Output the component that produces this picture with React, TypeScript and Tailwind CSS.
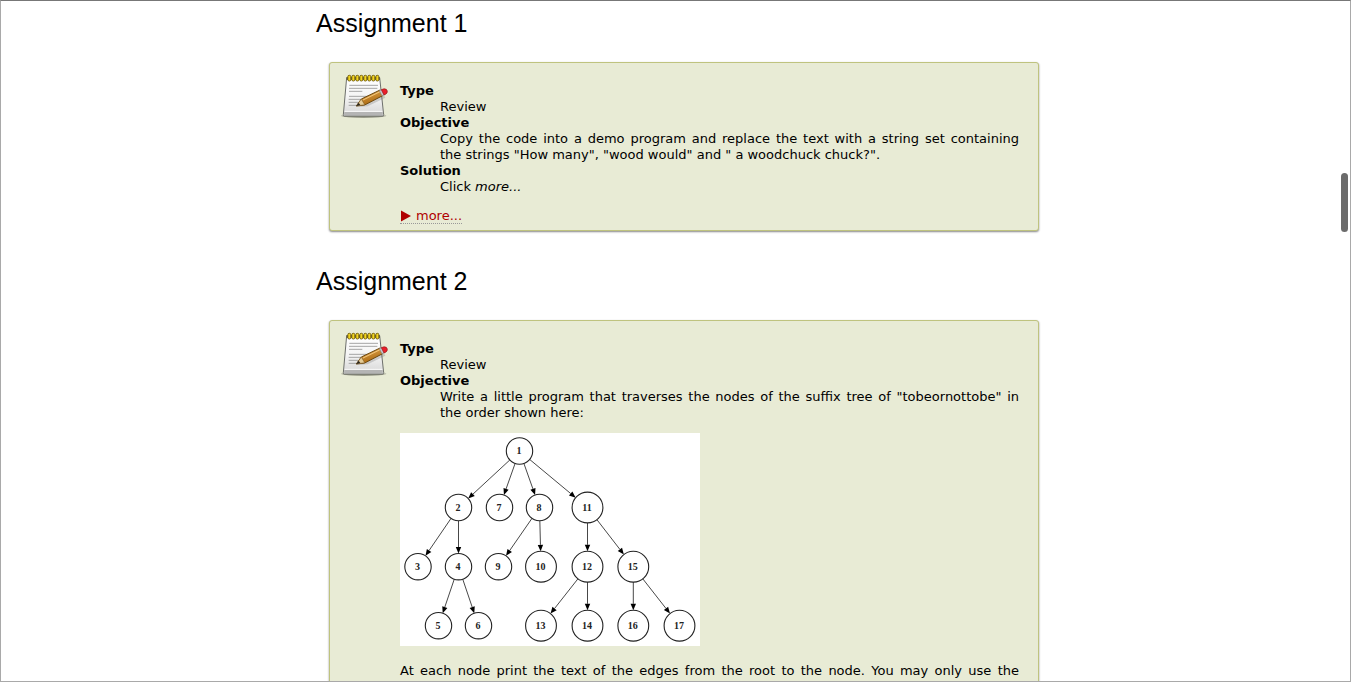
import type { ReactNode } from "react";

function NotepadIcon() {
  const rings = [43, 55, 67, 79, 91, 103, 115, 127];
  return (
    <svg viewBox="15 18 144 144" className="size-12 shrink-0" aria-hidden="true">
      <defs>
        <linearGradient id="paper" x1="0" y1="0" x2="0" y2="1">
          <stop offset="0" stopColor="#ffffff" />
          <stop offset="0.5" stopColor="#f4f4f4" />
          <stop offset="1" stopColor="#d6d6d6" />
        </linearGradient>
        <linearGradient id="wood" x1="0" y1="0" x2="0.4" y2="1">
          <stop offset="0" stopColor="#eab058" />
          <stop offset="1" stopColor="#a8660e" />
        </linearGradient>
      </defs>
      <ellipse cx="86" cy="152" rx="68" ry="7" fill="#77786a" opacity="0.35" />
      <ellipse cx="86" cy="153" rx="62" ry="5" fill="#55564a" opacity="0.45" />
      <path d="M35 38H134L146 149Q146 153 142 153H28Q24 153 25 149Z" fill="url(#paper)" stroke="#6d6f6b" strokeWidth="3" />
      <path d="M28 141H143V151H27Z" fill="#b4b4b4" />
      <path d="M29 139H142" stroke="#fafafa" strokeWidth="3" />
      <path d="M43 61H129M42 70H127M42 79H82M42 94H114M41 103H108M41 112H85M41 121H76" stroke="#999999" strokeWidth="2.6" />
      <path d="M34 41H135" stroke="#66645a" strokeWidth="8" />
      {rings.map((x) => (
        <rect key={x} x={x - 4.5} y="31" width="9" height="17" rx="4" fill="#f2d51f" stroke="#665208" strokeWidth="2.6" />
      ))}
      <path d="M68 126L98 124L151 98L144 86Z" fill="#777" opacity="0.3" />
      <path d="M64 123L79 102L135 75L143 92L89 120Z" fill="url(#wood)" stroke="#6e4a12" strokeWidth="3" strokeLinejoin="round" />
      <path d="M64 123L79 102L89 119Z" fill="#e6cc96" stroke="#745221" strokeWidth="1.5" />
      <path d="M63 124L71 113L76 120Z" fill="#29251e" />
      <path d="M84 105L135 80" stroke="#f7cb80" strokeWidth="3" />
      <path d="M133 77L141 73L148 89L141 93Z" fill="#c9cbcf" stroke="#777" strokeWidth="1.5" />
      <path d="M139 74Q148 69 154 73Q159 78 156 84Q153 88 147 90Z" fill="#ea1f2b" stroke="#911717" strokeWidth="2" />
    </svg>
  );
}

const nodes: Record<number, [number, number]> = {
  1: [119.5, 18],
  2: [58.5, 74.5],
  3: [18, 133.7],
  4: [58.5, 133.7],
  5: [38.5, 192.7],
  6: [78.5, 192.7],
  7: [99.5, 74.5],
  8: [139.5, 74.5],
  9: [98.5, 133.7],
  10: [141, 133.7],
  11: [187.5, 74.5],
  12: [187.5, 133.7],
  13: [141, 192.7],
  14: [187.5, 192.7],
  15: [233.3, 133.7],
  16: [233.3, 192.7],
  17: [279.5, 192.7],
};

const edges: [number, number][] = [
  [1, 2], [1, 7], [1, 8], [1, 11], [2, 3], [2, 4], [4, 5], [4, 6],
  [8, 9], [8, 10], [11, 12], [11, 15], [12, 13], [12, 14], [15, 16], [15, 17],
];

const radius = (id: number) => (id < 10 ? 13.2 : 15.4);

function SuffixTree() {
  return (
    <svg viewBox="0 0 300 213" width="300" height="213" className="block bg-white" role="img" aria-label="Suffix tree">
      {edges.map(([from, to]) => {
        const [ax, ay] = nodes[from];
        const [bx, by] = nodes[to];
        const length = Math.hypot(bx - ax, by - ay);
        const ux = (bx - ax) / length;
        const uy = (by - ay) / length;
        const tipX = bx - ux * radius(to);
        const tipY = by - uy * radius(to);
        const baseX = tipX - ux * 6.5;
        const baseY = tipY - uy * 6.5;
        return (
          <g key={`${from}-${to}`}>
            <line x1={ax + ux * radius(from)} y1={ay + uy * radius(from)} x2={baseX} y2={baseY} stroke="#333" strokeWidth="0.9" />
            <polygon
              points={`${tipX},${tipY} ${baseX - uy * 2.7},${baseY + ux * 2.7} ${baseX + uy * 2.7},${baseY - ux * 2.7}`}
              fill="#000"
            />
          </g>
        );
      })}
      {Object.entries(nodes).map(([id, [x, y]]) => (
        <g key={id}>
          <circle cx={x} cy={y} r={radius(Number(id))} fill="#fff" stroke="#222" strokeWidth="1.1" />
          <text x={x - 0.5} y={y + 3} textAnchor="middle" fontSize="10" fontWeight="700" fill="#222" fontFamily="'Liberation Serif', serif">
            {id}
          </text>
        </g>
      ))}
    </svg>
  );
}

function Assignment({ title, children }: { title: string; children: ReactNode }) {
  return (
    <section>
      <h2 className="pl-1 font-['Liberation_Sans',sans-serif] text-[25px] leading-8">{title}</h2>
      <div className="mt-[23px] ml-[17px] flex gap-3 rounded-[3px] border border-[#bfc37f] bg-[#e8ebd5] pt-2 pr-[19px] pb-1.5 pl-2.5 shadow-[0_1px_2px_#888888]">
        <NotepadIcon />
        <div className="min-w-0 flex-1 pt-3 text-justify">{children}</div>
      </div>
    </section>
  );
}

function Term({ name, children }: { name: string; children: ReactNode }) {
  return (
    <>
      <dt className="font-bold">{name}</dt>
      <dd className="pl-10">{children}</dd>
    </>
  );
}

export default function App() {
  return (
    <div className="relative h-screen overflow-hidden border border-[#a9a9a9] border-t-[#777777] bg-white font-['DejaVu_Sans',sans-serif] text-[13px] leading-4 text-black">
      <main className="mx-auto flex max-w-[727px] flex-col gap-[34px] pt-1.5">
        <Assignment title="Assignment 1">
          <dl>
            <Term name="Type">Review</Term>
            <Term name="Objective">
              <span className="block [text-align-last:justify]">
                Copy the code into a demo program and replace the text with a string set containing
              </span>{" "}
              the strings "How many", "wood would" and " a woodchuck chuck?".
            </Term>
            <Term name="Solution">
              Click <em>more...</em>
            </Term>
          </dl>
          <a href="#more" className="mt-[13px] flex w-fit items-center gap-[5px] border-b border-dotted border-[#999999] leading-[15px] text-[#b00000]">
            <svg viewBox="0 0 11 12" className="h-3 w-[11px]" aria-hidden="true">
              <path d="M1 0.5L11 6L1 11.5Z" fill="currentColor" />
            </svg>
            more...
          </a>
        </Assignment>
        <Assignment title="Assignment 2">
          <dl>
            <Term name="Type">Review</Term>
            <Term name="Objective">
              Write a little program that traverses the nodes of the suffix tree of "tobeornottobe" in the order shown
              here:
            </Term>
          </dl>
          <div className="mt-3 mb-[17px]">
            <SuffixTree />
          </div>
          <p className="[text-align-last:justify]">
            At each node print the text of the edges from the root to the node. You may only use the
          </p>
        </Assignment>
      </main>
      <div className="absolute top-[172px] right-0.5 h-[59px] w-[7px] rounded-full bg-[#6b6b6b]" />
    </div>
  );
}
